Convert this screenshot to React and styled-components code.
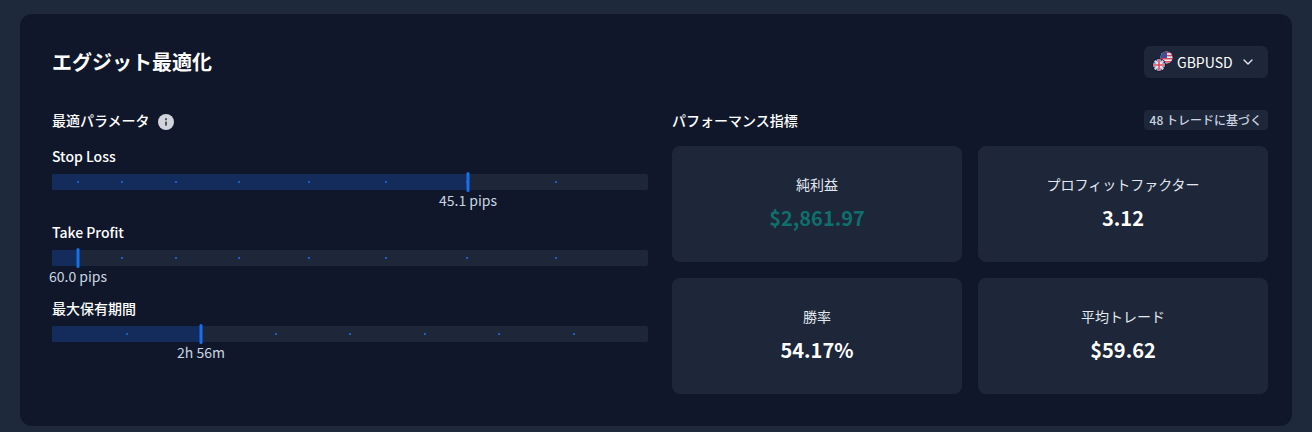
import React from "react";
import styled, { createGlobalStyle } from "styled-components";

const GlobalStyle = createGlobalStyle`
  html, body {
    margin: 0;
    padding: 0;
    background-color: #1e293b;
    font-family: "Noto Sans CJK JP", "Noto Sans", sans-serif;
    color: #ffffff;
  }
  * {
    box-sizing: border-box;
  }
`;

const Page = styled.div`
  width: 1312px;
  height: 432px;
  padding: 14px 20px 6px;
  overflow: hidden;
`;

const Panel = styled.div`
  height: 412px;
  padding: 32px 24px 32px 32px;
  background-color: #10172a;
  border-radius: 12px;
`;

const Header = styled.div`
  display: flex;
  align-items: center;
  justify-content: space-between;
  height: 32px;
  margin-bottom: 32px;
`;

const Title = styled.h2`
  margin: 0;
  font-size: 20px;
  line-height: 32px;
  font-weight: 700;
`;

const PairButton = styled.div`
  display: flex;
  align-items: center;
  width: 124px;
  height: 32px;
  padding: 0 12px 0 8px;
  background-color: #1e2639;
  border-radius: 6px;
  font-size: 14px;
  font-weight: 400;
`;

const PairName = styled.span`
  margin-left: 3px;
  flex: 1;
`;

const Columns = styled.div`
  display: grid;
  grid-template-columns: 596px 596px;
  gap: 24px;
`;

const SectionHead = styled.div`
  display: flex;
  align-items: center;
  justify-content: ${(p) => (p.$spread ? "space-between" : "flex-start")};
  gap: 8px;
  height: 20px;
  margin-bottom: 16px;
`;

const SectionTitle = styled.h3`
  margin: 0;
  font-size: 14px;
  line-height: 20px;
  font-weight: 500;
`;

const Badge = styled.span`
  padding: 0 6px;
  height: 20px;
  line-height: 20px;
  background-color: #1e2639;
  border-radius: 4px;
  font-size: 12px;
  font-weight: 500;
  color: #cbd5e1;
`;

const Param = styled.div`
  height: 76px;
`;

const ParamLabel = styled.div`
  height: 20px;
  margin-bottom: 8px;
  font-size: 14px;
  line-height: 20px;
  font-weight: 500;
`;

const Track = styled.div`
  position: relative;
  height: 16px;
  background-color: #1e2639;
  border-radius: 2px;
`;

const Fill = styled.div`
  position: absolute;
  left: 0;
  top: 0;
  bottom: 0;
  background-color: #132c5c;
  border-radius: 2px 0 0 2px;
`;

const Tick = styled.span`
  position: absolute;
  top: 7px;
  width: 2px;
  height: 2px;
  background-color: #1d5fc4;
`;

const Handle = styled.span`
  position: absolute;
  top: -2px;
  width: 3px;
  height: 20px;
  transform: translateX(-1.5px);
  background-color: #1570ef;
  border-radius: 1.5px;
`;

const ValueLabel = styled.span`
  position: absolute;
  top: 16px;
  transform: translateX(-50%);
  font-size: 14px;
  line-height: 20px;
  white-space: nowrap;
  color: #cbd5e1;
`;

const Cards = styled.div`
  display: grid;
  grid-template-columns: 290px 290px;
  grid-auto-rows: 116px;
  gap: 16px;
`;

const Card = styled.div`
  display: flex;
  flex-direction: column;
  align-items: center;
  justify-content: center;
  padding-bottom: 2px;
  background-color: #1e2639;
  border-radius: 8px;
`;

const CardLabel = styled.div`
  font-size: 14px;
  line-height: 20px;
  margin-bottom: 10px;
  color: #e2e8f0;
`;

const CardValue = styled.div`
  font-size: 20px;
  line-height: 28px;
  font-weight: 700;
  color: ${(p) => p.$color || "#ffffff"};
`;

const InfoSvg = styled.svg`
  margin-top: 4px;
`;

const InfoIcon = () => (
  <InfoSvg width="16" height="16" viewBox="0 0 16 16">
    <circle cx="8" cy="8" r="8" fill="#d1d5db" />
    <rect x="7" y="4.2" width="2" height="2" fill="#4b5563" />
    <rect x="7" y="7.6" width="2" height="4" fill="#4b5563" />
  </InfoSvg>
);

const Chevron = () => (
  <svg width="16" height="16" viewBox="0 0 24 24" fill="none" stroke="#e2e8f0" strokeWidth="2" strokeLinecap="round" strokeLinejoin="round">
    <path d="m6 9 6 6 6-6" />
  </svg>
);

const Flags = () => (
  <svg width="22" height="22" viewBox="0 0 22 22">
    <defs>
      <clipPath id="usClip">
        <circle cx="14.5" cy="6.5" r="6" />
      </clipPath>
      <clipPath id="ukClip">
        <circle cx="7" cy="14" r="6" />
      </clipPath>
    </defs>
    <g clipPath="url(#usClip)">
      <rect x="8" y="0" width="13" height="13" fill="#f1f5f9" />
      <rect x="8" y="0.7" width="13" height="1.6" fill="#d9455a" />
      <rect x="8" y="3.8" width="13" height="1.6" fill="#d9455a" />
      <rect x="8" y="6.9" width="13" height="1.6" fill="#d9455a" />
      <rect x="8" y="10" width="13" height="1.6" fill="#d9455a" />
      <rect x="8" y="0" width="7" height="7" fill="#3b4f93" />
    </g>
    <circle cx="7" cy="14" r="6.8" fill="#10172a" />
    <g clipPath="url(#ukClip)">
      <rect x="1" y="8" width="12" height="12" fill="#3f5aa6" />
      <path d="M1 8 13 20M13 8 1 20" stroke="#f1d5da" strokeWidth="2" />
      <path d="M7 8v12M1 14h12" stroke="#f1f5f9" strokeWidth="3" />
      <path d="M7 8v12M1 14h12" stroke="#d9455a" strokeWidth="1.6" />
    </g>
  </svg>
);

const params = [
  { label: "Stop Loss", value: "45.1 pips", pos: 416, ticks: [25, 69, 123, 186, 256, 333, 414, 503] },
  { label: "Take Profit", value: "60.0 pips", pos: 26, ticks: [69, 123, 186, 256, 333, 414, 503] },
  { label: "最大保有期間", value: "2h 56m", pos: 149, ticks: [74, 223, 297, 372, 446, 521] },
];

const metrics = [
  { label: "純利益", value: "$2,861.97", color: "#0f6f6c" },
  { label: "プロフィットファクター", value: "3.12" },
  { label: "勝率", value: "54.17%" },
  { label: "平均トレード", value: "$59.62" },
];

export default function App() {
  return (
    <Page>
      <GlobalStyle />
      <Panel>
        <Header>
          <Title>エグジット最適化</Title>
          <PairButton>
            <Flags />
            <PairName>GBPUSD</PairName>
            <Chevron />
          </PairButton>
        </Header>
        <Columns>
          <div>
            <SectionHead>
              <SectionTitle>最適パラメータ</SectionTitle>
              <InfoIcon />
            </SectionHead>
            {params.map((param) => (
              <Param key={param.label}>
                <ParamLabel>{param.label}</ParamLabel>
                <Track>
                  <Fill style={{ width: param.pos }} />
                  {param.ticks.map((x) => (
                    <Tick key={x} style={{ left: x }} />
                  ))}
                  <Handle style={{ left: param.pos }} />
                  <ValueLabel style={{ left: param.pos }}>{param.value}</ValueLabel>
                </Track>
              </Param>
            ))}
          </div>
          <div>
            <SectionHead $spread>
              <SectionTitle>パフォーマンス指標</SectionTitle>
              <Badge>48 トレードに基づく</Badge>
            </SectionHead>
            <Cards>
              {metrics.map((metric) => (
                <Card key={metric.label}>
                  <CardLabel>{metric.label}</CardLabel>
                  <CardValue $color={metric.color}>{metric.value}</CardValue>
                </Card>
              ))}
            </Cards>
          </div>
        </Columns>
      </Panel>
    </Page>
  );
}
